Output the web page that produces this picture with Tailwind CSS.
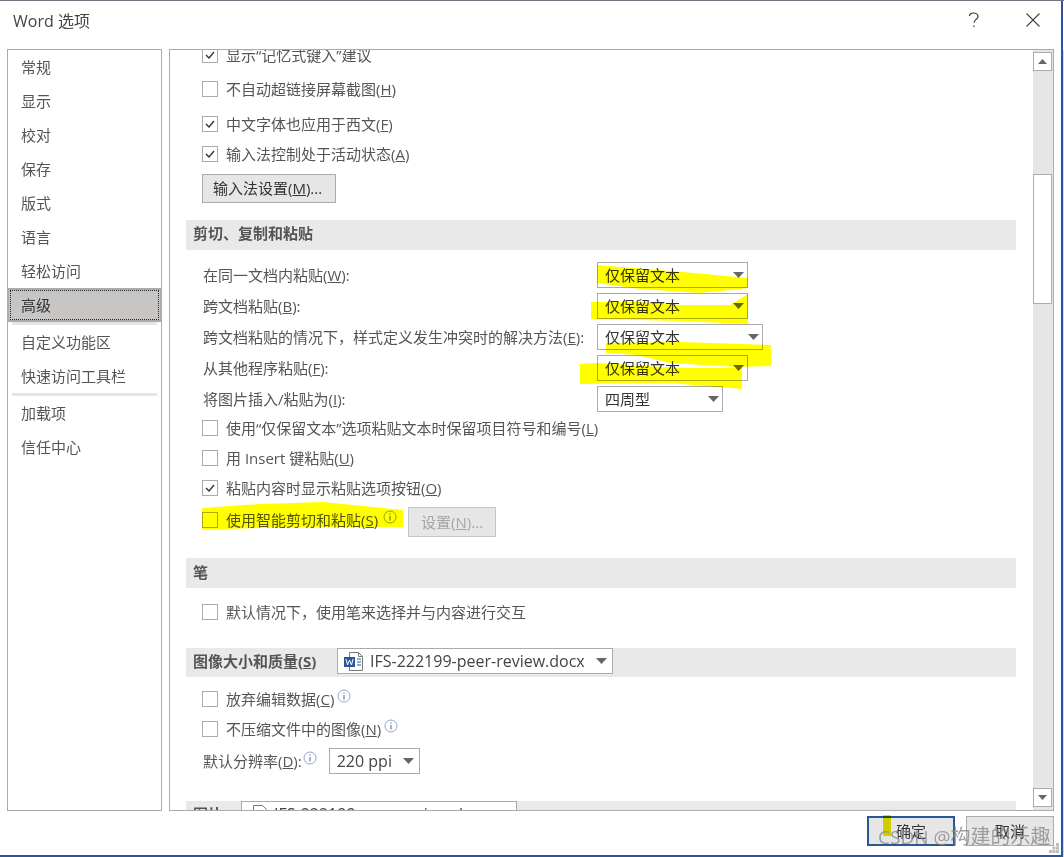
<!DOCTYPE html>
<html lang="zh"><head><meta charset="utf-8"><script src="https://cdn.jsdelivr.net/npm/@tailwindcss/browser@4"></script></head>
<body class="m-0 bg-white">
<div class="relative w-[1064px] h-[857px] overflow-hidden bg-white text-[15px] leading-[20px] text-[#555] font-['Open_Sans','Noto_Sans_CJK_SC',sans-serif]">
  <!-- backdrop strips -->
  <div class="absolute left-0 top-0 w-full h-[1px] bg-[#6d7480]"></div>
  <div class="absolute right-0 top-[50px] w-[1px] h-[807px] bg-[#d9d9d9]"></div>

  <div class="flex flex-col w-[1063px] h-[857px] pt-[1px] border-r-2 border-b-2 border-t border-[#2b579a] bg-white">
    <!-- title -->
    <div class="flex items-center h-[47px] pl-[13px] pb-[10px] shrink-0">
      <span class="text-[16px] text-[#444] flex-1">Word 选项</span>
      <svg class="mr-[46px] mb-[1px]" width="12" height="16" viewBox="0 0 12 16" fill="none" stroke="#333" stroke-width="1.2"><path d="M1.5 4C1.5 2 3.2 1 5.5 1S10 2.4 10 4.4c0 3-4 3-4 6.4"/><path d="M6 13.500v1.500"/></svg>
      <svg class="mr-[21px] mb-[1px]" width="14" height="14" viewBox="0 0 14 14" fill="none" stroke="#444" stroke-width="1.1"><path d="M.5.5l13 13M13.500.5l-13 13"/></svg>
    </div>
    <!-- main -->
    <div class="flex h-[762px] pl-[7px] gap-[7px] shrink-0">
      <!-- nav -->
      <div class="w-[155px] border border-[#ababab] flex flex-col shrink-0">
        <div class="h-[34px] flex items-center pl-[13px]">常规</div>
        <div class="h-[34px] flex items-center pl-[13px]">显示</div>
        <div class="h-[34px] flex items-center pl-[13px]">校对</div>
        <div class="h-[34px] flex items-center pl-[13px]">保存</div>
        <div class="h-[34px] flex items-center pl-[13px]">版式</div>
        <div class="h-[34px] flex items-center pl-[13px]">语言</div>
        <div class="h-[34px] flex items-center pl-[13px]">轻松访问</div>
        <div class="h-[34px] bg-[#c8c6c4] border-2 border-[#ababab] border-x-[1px]"><div class="h-full ml-[1px] mr-[1px] border border-dotted border-[#222] flex items-center pl-[10px] text-[#333]">高级</div></div>
        <div class="h-[3px] mx-[4px] bg-[#e6e6e6]"></div>
        <div class="h-[34px] flex items-center pl-[13px]">自定义功能区</div>
        <div class="h-[34px] flex items-center pl-[13px]">快速访问工具栏</div>
        <div class="h-[3px] mx-[4px] bg-[#e6e6e6]"></div>
        <div class="h-[34px] flex items-center pl-[13px]">加载项</div>
        <div class="h-[34px] flex items-center pl-[13px]">信任中心</div>
      </div>
      <!-- content -->
      <div class="relative w-[885px] border border-[#ababab] overflow-hidden shrink-0">
        <div class="w-[830px] ml-[16px] flex flex-col -mt-[10px]">
          <div class="h-[30px] flex items-center gap-[8px] pl-[16px]"><span class="w-4 h-4 border border-[#ababab] flex items-center justify-center"><svg width="10" height="8" viewBox="0 0 10 8" fill="none" stroke="#333" stroke-width="1.4"><path d="M1 4l3 3 5-6"/></svg></span>显示“记忆式键入”建议</div>
          <div class="h-[30px] mt-[4px] flex items-center gap-[8px] pl-[16px]"><span class="w-4 h-4 border border-[#ababab]"></span><span>不自动超链接屏幕截图(<span class="underline">H</span>)</span></div>
          <div class="h-[30px] mt-[5px] flex items-center gap-[8px] pl-[16px]"><span class="w-4 h-4 border border-[#ababab] flex items-center justify-center"><svg width="10" height="8" viewBox="0 0 10 8" fill="none" stroke="#333" stroke-width="1.4"><path d="M1 4l3 3 5-6"/></svg></span><span>中文字体也应用于西文(<span class="underline">F</span>)</span></div>
          <div class="h-[30px] flex items-center gap-[8px] pl-[16px]"><span class="w-4 h-4 border border-[#ababab] flex items-center justify-center"><svg width="10" height="8" viewBox="0 0 10 8" fill="none" stroke="#333" stroke-width="1.4"><path d="M1 4l3 3 5-6"/></svg></span><span>输入法控制处于活动状态(<span class="underline">A</span>)</span></div>
          <div class="pl-[16px] mt-[5px]"><div class="w-[134px] h-[29px] border border-[#ababab] bg-[#e6e6e6] flex items-center pl-[10px] pb-[1px] text-[#333]"><span>输入法设置(<span class="underline">M</span>)...</span></div></div>
          <div class="h-[30px] mt-[17px] bg-[#e9e9e9] flex items-center pl-[7px] pb-[4px] font-bold">剪切、复制和粘贴</div>

          <div class="h-[26px] mt-[12px] flex items-center pl-[17px]"><span class="w-[394px]">在同一文档内粘贴(<span class="underline">W</span>):</span><div class="w-[151px] h-[26px] border border-[#ababab] flex items-center justify-between pl-[7px] pr-[3px] text-[#333]">仅保留文本<svg width="11" height="6" viewBox="0 0 11 6" fill="#666"><path d="M0 0h11L5.500 6z"/></svg></div></div>
          <div class="h-[26px] mt-[5px] flex items-center pl-[17px]"><span class="w-[394px]">跨文档粘贴(<span class="underline">B</span>):</span><div class="w-[151px] h-[26px] border border-[#ababab] flex items-center justify-between pl-[7px] pr-[3px] text-[#333]">仅保留文本<svg width="11" height="6" viewBox="0 0 11 6" fill="#666"><path d="M0 0h11L5.500 6z"/></svg></div></div>
          <div class="h-[26px] mt-[5px] flex items-center pl-[17px]"><span class="w-[394px]">跨文档粘贴的情况下，样式定义发生冲突时的解决方法(<span class="underline">E</span>):</span><div class="w-[166px] h-[26px] border border-[#ababab] flex items-center justify-between pl-[7px] pr-[3px] text-[#333]">仅保留文本<svg width="11" height="6" viewBox="0 0 11 6" fill="#666"><path d="M0 0h11L5.500 6z"/></svg></div></div>
          <div class="h-[26px] mt-[5px] flex items-center pl-[17px]"><span class="w-[394px]">从其他程序粘贴(<span class="underline">F</span>):</span><div class="w-[151px] h-[26px] border border-[#ababab] flex items-center justify-between pl-[7px] pr-[3px] text-[#333]">仅保留文本<svg width="11" height="6" viewBox="0 0 11 6" fill="#666"><path d="M0 0h11L5.500 6z"/></svg></div></div>
          <div class="h-[26px] mt-[5px] flex items-center pl-[17px]"><span class="w-[394px]">将图片插入/粘贴为(<span class="underline">I</span>):</span><div class="w-[126px] h-[26px] border border-[#ababab] flex items-center justify-between pl-[7px] pr-[3px] text-[#333]">四周型<svg width="11" height="6" viewBox="0 0 11 6" fill="#666"><path d="M0 0h11L5.500 6z"/></svg></div></div>

          <div class="h-[30px] mt-[1px] flex items-center gap-[8px] pl-[16px]"><span class="w-4 h-4 border border-[#ababab]"></span><span>使用“仅保留文本”选项粘贴文本时保留项目符号和编号(<span class="underline">L</span>)</span></div>
          <div class="h-[30px] flex items-center gap-[8px] pl-[16px]"><span class="w-4 h-4 border border-[#ababab]"></span><span>用 Insert 键粘贴(<span class="underline">U</span>)</span></div>
          <div class="h-[30px] flex items-center gap-[8px] pl-[16px]"><span class="w-4 h-4 border border-[#ababab] flex items-center justify-center"><svg width="10" height="8" viewBox="0 0 10 8" fill="none" stroke="#333" stroke-width="1.4"><path d="M1 4l3 3 5-6"/></svg></span><span>粘贴内容时显示粘贴选项按钮(<span class="underline">O</span>)</span></div>
          <div class="h-[30px] mt-[2px] flex items-center pl-[16px]"><span class="w-4 h-4 border border-[#ababab]"></span><span class="ml-[8px]">使用智能剪切和粘贴(<span class="underline">S</span>)</span>
            <svg class="ml-[5px] -mt-[6px]" width="14" height="14" viewBox="0 0 14 14" fill="none" stroke="#8fa7d4"><circle cx="7" cy="7" r="6"/><path d="M7 6v4.500M7 3.500v1.200" stroke="#666"/></svg>
            <div class="w-[88px] h-[30px] ml-[11px] mt-[4px] border border-[#c6c6c6] bg-[#e6e6e6] flex items-center justify-center text-[#a6a6a6]"><span>设置(<span class="underline">N</span>)...</span></div></div>

          <div class="h-[30px] mt-[23px] bg-[#e9e9e9] flex items-center pl-[7px] pb-[2px] font-bold">笔</div>
          <div class="h-[30px] mt-[9px] flex items-center gap-[8px] pl-[16px]"><span class="w-4 h-4 border border-[#ababab]"></span>默认情况下，使用笔来选择并与内容进行交互</div>

          <div class="h-[29px] mt-[21px] bg-[#e9e9e9] flex items-start pl-[7px]"><span class="font-bold mt-[3px] w-[144px]">图像大小和质量(<span class="underline">S</span>)</span>
            <div class="w-[276px] h-[26px] bg-white border border-[#ababab] flex items-center pl-[6px] pr-[5px] gap-[6px] text-[16px] text-[#444]">
              <svg width="20" height="19" viewBox="0 0 20 19"><path d="M5.500.5h9l4 4v14h-13z" fill="#fff" stroke="#777"/><path d="M14.500.5v4h4" fill="none" stroke="#777"/><path d="M13 7h4M13 10h4M13 13h4" stroke="#2b579a"/><rect x="0" y="5" width="11" height="10" fill="#2b579a"/><path d="M2 7l1.500 6L5.500 8l2 5L9 7" fill="none" stroke="#fff"/></svg>
              <span class="flex-1">IFS-222199-peer-review.docx</span><svg width="11" height="6" viewBox="0 0 11 6" fill="#666"><path d="M0 0h11L5.500 6z"/></svg></div></div>

          <div class="h-[30px] mt-[7px] flex items-center pl-[16px]"><span class="w-4 h-4 border border-[#ababab]"></span><span class="ml-[8px]">放弃编辑数据(<span class="underline">C</span>)</span><svg class="ml-[3px] -mt-[6px]" width="14" height="14" viewBox="0 0 14 14" fill="none" stroke="#8fa7d4"><circle cx="7" cy="7" r="6"/><path d="M7 6v4.500M7 3.500v1.200" stroke="#666"/></svg></div>
          <div class="h-[30px] flex items-center pl-[16px]"><span class="w-4 h-4 border border-[#ababab]"></span><span class="ml-[8px]">不压缩文件中的图像(<span class="underline">N</span>)</span><svg class="ml-[3px] -mt-[6px]" width="14" height="14" viewBox="0 0 14 14" fill="none" stroke="#8fa7d4"><circle cx="7" cy="7" r="6"/><path d="M7 6v4.500M7 3.500v1.200" stroke="#666"/></svg></div>
          <div class="h-[26px] mt-[4px] flex items-center pl-[17px]"><span>默认分辨率(<span class="underline">D</span>):</span><svg class="ml-[1px] -mt-[6px]" width="14" height="14" viewBox="0 0 14 14" fill="none" stroke="#8fa7d4"><circle cx="7" cy="7" r="6"/><path d="M7 6v4.500M7 3.500v1.200" stroke="#666"/></svg><div class="w-[91px] h-[26px] ml-[12px] border border-[#ababab] flex items-center justify-between pl-[7px] pr-[5px] text-[16px] text-[#444]">220 ppi<svg width="11" height="6" viewBox="0 0 11 6" fill="#666"><path d="M0 0h11L5.500 6z"/></svg></div></div>

          <div class="h-[29px] mt-[27px] bg-[#e9e9e9] flex items-start pl-[7px]"><span class="font-bold mt-[3px] w-[48px]">图片</span>
            <div class="w-[276px] h-[26px] bg-white border border-[#ababab] flex items-center pl-[6px] gap-[6px] text-[16px] text-[#444]">
              <svg width="20" height="19" viewBox="0 0 20 19"><path d="M5.500.5h9l4 4v14h-13z" fill="#fff" stroke="#777"/><rect x="0" y="5" width="11" height="10" fill="#2b579a"/></svg>
              <span>IFS-222199-peer-review.docx</span></div></div>
        </div>
        <!-- scrollbar -->
        <div class="absolute right-0 top-0 bottom-0 w-[20px] bg-[#e6e6e6] flex flex-col pb-[3px] pt-[2px]">
          <div class="h-[19px] w-[19px] bg-white border border-[#ababab] flex items-center justify-center"><svg width="9" height="5" viewBox="0 0 9 5" fill="#666"><path d="M0 5h9L4.500 0z"/></svg></div>
          <div class="h-[130px] w-[19px] mt-[103px] bg-white border border-[#ababab]"></div>
          <div class="flex-1"></div>
          <div class="h-[19px] w-[19px] bg-white border border-[#ababab] flex items-center justify-center"><svg width="9" height="5" viewBox="0 0 9 5" fill="#666"><path d="M0 0h9L4.500 5z"/></svg></div>
        </div>
      </div>
    </div>
    <!-- footer -->
    <div class="flex justify-end gap-[11px] pt-[5px] pr-[7px]">
      <div class="w-[88px] h-[30px] border-2 border-[#2b579a] bg-[#e6e6e6] flex items-center justify-center text-[#333]">确定</div>
      <div class="w-[88px] h-[30px] border border-[#ababab] bg-[#e6e6e6] flex items-center justify-center text-[#333]">取消</div>
    </div>
  </div>

  <!-- marker highlights -->
  <svg class="absolute left-0 top-0 pointer-events-none mix-blend-multiply" width="1064" height="857" viewBox="0 0 1064 857" fill="#ffff00">
    <path d="M597 265L683 272 748 278V288L700 293 640 289 597 283Z"/>
    <path d="M591 302L640 302 680 305 730 305 748 294V324L680 321 600 319 591 319Z"/>
    <path d="M606 343L680 342 771 345V366L737 367 670 363 637 355 606 353Z"/>
    <path d="M580 364L597 363 680 368 742 368V389L670 383 580 384Z"/>
    <path d="M202 508L260 504 323 502 403 510V527L323 527 257 528 202 530Z"/>
    <path d="M883 815h8v21h-8z" fill="#e6e600"/>
  </svg>
  <!-- resize grip -->
  <svg class="absolute left-[1049px] top-[843px]" width="10" height="10" viewBox="0 0 10 10" fill="#bdbdbd"><rect x="7" y="0" width="3" height="3"/><rect x="3.500" y="3.500" width="3" height="3"/><rect x="7" y="3.500" width="3" height="3"/><rect x="0" y="7" width="3" height="3"/><rect x="3.500" y="7" width="3" height="3"/><rect x="7" y="7" width="3" height="3"/></svg>
  <!-- watermark -->
  <div class="absolute left-[878px] top-[825px] text-[19px] leading-[24px] text-[#8a8a8a]/80 whitespace-nowrap">CSDN @<span class="text-[20px]">构建的乐趣</span></div>
</div>
</body></html>
